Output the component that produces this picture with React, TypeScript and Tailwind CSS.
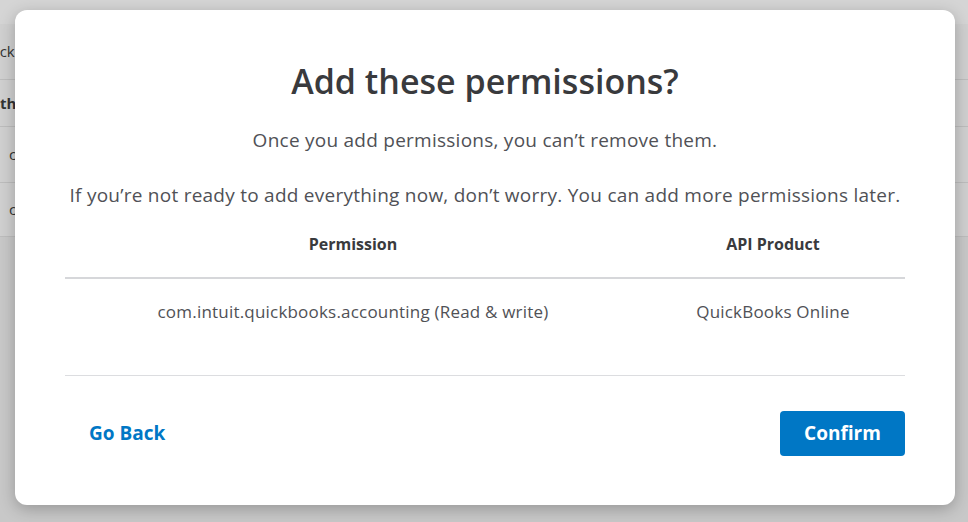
import React from 'react';

const rows = [
  { label: 'QuickBooks', bold: false, h: 'h-[56px]', indent: '-ml-[25px]' },
  { label: 'Other', bold: true, h: 'h-[47px]', indent: '-ml-[12px]' },
  { label: 'com.intuit', bold: false, h: 'h-[56px]', indent: 'ml-[9px]' },
  { label: 'com.intuit', bold: false, h: 'h-[54px]', indent: 'ml-[9px]' },
];

const permissions = [
  { scope: 'com.intuit.quickbooks.accounting (Read & write)', product: 'QuickBooks Online' },
];

function BackgroundPage() {
  return (
    <div className="h-[522px] w-full bg-[#c8c8c8]">
      <div className="h-[24px] bg-[#d5d5d5]" />
      <div className="bg-[#d0d0d0]">
        {rows.map((row, i) => (
          <div
            key={i}
            className={`${row.h} flex items-center border-b border-[#bdbdbd] text-[15px] text-[#333] ${row.bold ? 'font-bold' : ''}`}
          >
            <span className={row.indent}>{row.label}</span>
          </div>
        ))}
      </div>
    </div>
  );
}

export default function App() {
  return (
    <div className="relative h-[522px] w-[968px] overflow-hidden font-['Open_Sans',sans-serif]">
      <BackgroundPage />
      <div className="absolute inset-0 pl-[15px] pt-[10px]">
        <div className="flex h-[495px] w-[940px] flex-col rounded-[12px] bg-white shadow-[0_4px_16px_rgba(0,0,0,0.25)]">
          <h1 className="mt-[49px] text-center text-[34px] font-semibold leading-[44px] text-[#393a3d]">
            Add these permissions?
          </h1>
          <p className="mt-[25px] text-center text-[19px] leading-[24px] tracking-[0.25px] text-[#505156]">
            Once you add permissions, you can’t remove them.
          </p>
          <p className="mt-[31px] text-center text-[19px] leading-[24px] tracking-[0.25px] text-[#505156]">
            If you’re not ready to add everything now, don’t worry. You can add more permissions later.
          </p>

          <div className="mx-[50px] mt-[15px]">
            <div className="grid h-[57px] grid-cols-[576px_1fr] border-b-2 border-[#d6d7da] pb-[12px] text-[16px] font-bold text-[#393a3d]">
              <div className="flex items-center justify-center">Permission</div>
              <div className="flex items-center justify-center">API Product</div>
            </div>
            {permissions.map((p) => (
              <div
                key={p.scope}
                className="grid h-[97px] grid-cols-[576px_1fr] border-b border-[#dcdde0] pb-[30px] text-[17px] tracking-[0.2px] text-[#505156]"
              >
                <div className="flex items-center justify-center">{p.scope}</div>
                <div className="flex items-center justify-center">{p.product}</div>
              </div>
            ))}
          </div>

          <div className="mx-[50px] mt-[35px] flex items-center justify-between">
            <button className="ml-[24px] text-[19px] font-bold text-[#0077c5]">Go Back</button>
            <button className="h-[45px] w-[125px] rounded-[4px] bg-[#0077c5] text-[19px] font-bold text-white">
              Confirm
            </button>
          </div>
        </div>
      </div>
    </div>
  );
}
